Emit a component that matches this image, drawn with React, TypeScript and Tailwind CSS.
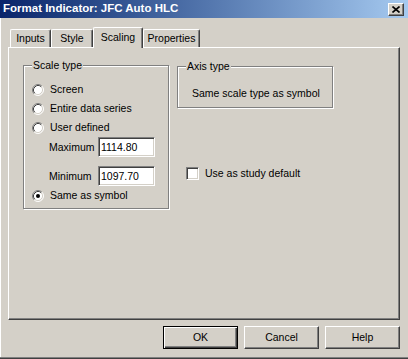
import React from 'react'

const raised =
  'border border-t-white border-l-white border-b-[#404040] border-r-[#404040] shadow-[inset_-1px_-1px_0_#808080]'
const sunken =
  'border border-t-[#808080] border-l-[#808080] border-b-white border-r-white shadow-[inset_1px_1px_0_#404040,inset_-1px_-1px_0_#d4d0c8]'
const etched = 'border border-[#808080] shadow-[inset_1px_1px_0_#fff,1px_1px_0_#fff]'

function Radio({ checked = false }: { checked?: boolean }) {
  return (
    <svg width="12" height="12" viewBox="0 0 12 12" className="shrink-0">
      <circle cx="6" cy="6" r="5" fill="#fff" />
      <path d="M2.11 9.89 A5.5 5.5 0 0 1 9.89 2.11" fill="none" stroke="#808080" strokeWidth="1" />
      <path d="M9.89 2.11 A5.5 5.5 0 0 1 2.11 9.89" fill="none" stroke="#fff" strokeWidth="1" />
      <path d="M2.82 9.18 A4.5 4.5 0 0 1 9.18 2.82" fill="none" stroke="#404040" strokeWidth="1" />
      <path d="M9.18 2.82 A4.5 4.5 0 0 1 2.82 9.18" fill="none" stroke="#d4d0c8" strokeWidth="1" />
      {checked && <circle cx="6" cy="6" r="2" fill="#000" />}
    </svg>
  )
}

function Option({ label, checked }: { label: string; checked?: boolean }) {
  return (
    <div className="flex h-[19px] items-center pl-[8px]">
      <Radio checked={checked} />
      <span className="ml-[6px]">{label}</span>
    </div>
  )
}

function Field({ label, value }: { label: string; value: string }) {
  return (
    <div className="flex h-[20px] items-center pl-[25px]">
      <span className="w-[49px]">{label}</span>
      <div className={`${sunken} flex h-[20px] w-[57px] items-center bg-white pl-[2px]`}>{value}</div>
    </div>
  )
}

function Tab({ label, w, active }: { label: string; w: string; active?: boolean }) {
  return (
    <div
      className={`${w} flex items-center justify-center rounded-t-[2px] border-t border-l border-r border-t-white border-l-white border-r-[#404040] bg-[#d4d0c8] shadow-[inset_-1px_0_0_#808080] ${
        active ? 'relative z-10 h-[21px] -mb-[1px] pb-[2px]' : 'h-[18px]'
      }`}
    >
      {label}
    </div>
  )
}

export default function App() {
  return (
    <div className="flex h-[359px] w-[408px] flex-col bg-[#d4d0c8] text-[10.5px] leading-none text-black font-['Liberation_Sans',Arial,sans-serif] shadow-[inset_0_-1px_0_#404040,inset_0_-2px_0_#808080,inset_1px_0_0_#fff]">
      <div className="flex h-[18px] items-center justify-between bg-gradient-to-r from-[#0a246a] to-[#a6caf0] pl-[3px] pr-[4px]">
        <span className="text-[11.5px] font-bold text-white">Format Indicator: JFC Auto HLC</span>
        <div className={`${raised} flex h-[13px] w-[16px] items-center justify-center bg-[#d4d0c8]`}>
          <svg width="8" height="7" viewBox="0 0 8 7">
            <path d="M0.5 0.5 L7.5 6.5 M7.5 0.5 L0.5 6.5" stroke="#000" strokeWidth="1.6" />
          </svg>
        </div>
      </div>

      <div className="mt-[9px] flex items-end pl-[10px]">
        <Tab label="Inputs" w="w-[41px]" />
        <Tab label="Style" w="w-[42px]" />
        <Tab label="Scaling" w="w-[50px]" active />
        <Tab label="Properties" w="w-[57px]" />
      </div>

      <div className="ml-[8px] flex h-[273px] w-[392px] border-t border-l border-b border-r border-t-white border-l-white border-b-[#404040] border-r-[#404040] shadow-[inset_-1px_-1px_0_#808080]">
        <div className={`${etched} relative ml-[14px] mt-[17px] h-[144px] w-[146px] pt-[14px]`}>
          <span className="absolute -top-[6px] left-[8px] bg-[#d4d0c8] px-[1px]">Scale type</span>
          <Option label="Screen" />
          <Option label="Entire data series" />
          <Option label="User defined" />
          <Field label="Maximum" value="1114.80" />
          <div className="mt-[9px]">
            <Field label="Minimum" value="1097.70" />
          </div>
          <Option label="Same as symbol" checked />
        </div>

        <div className="ml-[8px] mt-[18px] flex flex-col">
          <div className={`${etched} relative h-[42px] w-[156px] pl-[14px] pt-[21px]`}>
            <span className="absolute -top-[6px] left-[8px] bg-[#d4d0c8] px-[1px]">Axis type</span>
            Same scale type as symbol
          </div>
          <div className="ml-[9px] mt-[59px] flex items-center">
            <div className={`${sunken} h-[13px] w-[13px] bg-white`} />
            <span className="ml-[6px]">Use as study default</span>
          </div>
        </div>
      </div>

      <div className="mt-[6px] flex justify-end gap-[6px] pr-[8px]">
        <button className="flex h-[23px] w-[75px] items-center justify-center border border-black bg-[#d4d0c8] shadow-[inset_1px_1px_0_#fff,inset_-1px_-1px_0_#404040,inset_-2px_-2px_0_#808080]">
          OK
        </button>
        <button className={`${raised} flex h-[23px] w-[75px] items-center justify-center bg-[#d4d0c8]`}>Cancel</button>
        <button className={`${raised} flex h-[23px] w-[75px] items-center justify-center bg-[#d4d0c8]`}>Help</button>
      </div>
    </div>
  )
}
